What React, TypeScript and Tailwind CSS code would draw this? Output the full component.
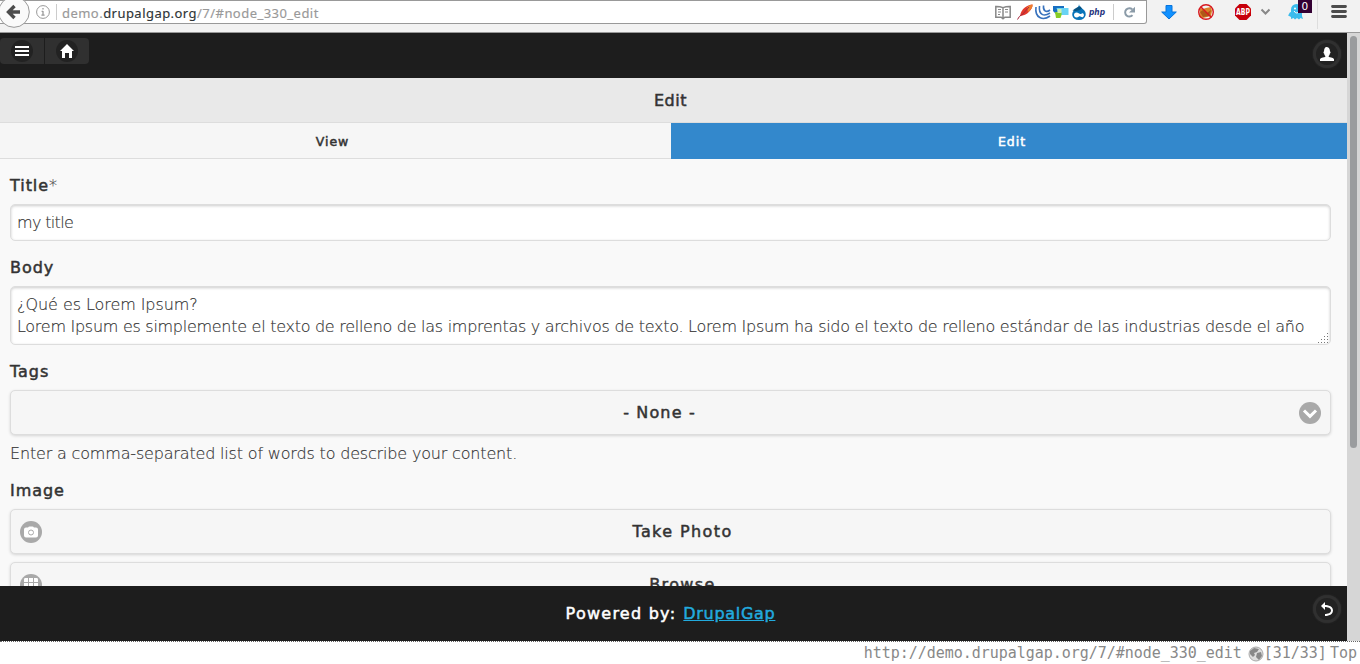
import type { ReactNode } from "react";

const strong = "font-['DejaVu_Sans',sans-serif] font-normal [-webkit-text-stroke:0.5px_currentColor]";

function Disc({ children, dark = false }: { children: ReactNode; dark?: boolean }) {
  return (
    <span className={`flex size-[22px] shrink-0 items-center justify-center rounded-full ${dark ? "bg-[#222]" : "bg-[#a9a9a9]"}`}>
      <svg viewBox="0 0 14 14" className="size-[14px] overflow-visible fill-white">{children}</svg>
    </span>
  );
}

const Bars = () => <path d="M0 2h14v2H0zM0 6h14v2H0zM0 10h14v2H0z" shapeRendering="crispEdges" />;
const Home = () => <path d="M7 0 0 7h2v7h3V9h4v5h3V7h2z" />;
const User = () => (
  <path d="M8.85 10.1c-.18-.4-.2-.76-.15-1.1.68-.51 1.04-1.38 1.19-2.54.6-.11.61-.5.61-.96 0-.44-.01-.8-.5-.94V4.5c0-2.1-1-4-2-4C8 .5 7.5 0 6.5 0 5 0 4 1.88 4 4.5v.06c-.49.14-.5.5-.5.94 0 .46.01.85.61.96C4.26 7.62 4.62 8.5 5.3 9c.05.34.03.7-.15 1.1C1.5 10.5 0 12 0 12v2h14v-2s-1.5-1.5-5.15-1.9z" />
);
const Back = () => <path d="M5 3V0L1 4l4 4V5s6 0 6 3.5S5 12 5 12v2s8 0 8-5.5S5 3 5 3z" />;
const Carat = () => <path d="M11.95 3.4 7 8.35 2.05 3.4-.07 5.52 7 12.6l7.07-7.08z" />;
const Camera = () => (
  <>
    <path d="M12 2.5H9.9a1.5 1.5 0 0 0-1.4-1h-3a1.5 1.5 0 0 0-1.4 1H2a2 2 0 0 0-2 2v6a2 2 0 0 0 2 2h10a2 2 0 0 0 2-2v-6a2 2 0 0 0-2-2z" />
    <circle cx="7" cy="7.5" r="2.5" fill="none" stroke="#a9a9a9" />
  </>
);
const Grid = () => <path d="M0 1.4Q0 0 1.4 0H4v4H0zM5 0h4v4H5zM10 0h2.6Q14 0 14 1.4V4h-4zM0 5h4v4H0zM5 5h4v4H5zM10 5h4v4h-4zM0 10h4v4H1.4Q0 14 0 12.6zM5 10h4v4H5zM10 10h4v2.6q0 1.4-1.4 1.4H10z" />;

function Toolbar() {
  return (
    <div className="relative flex h-[33px] shrink-0 border-b border-[#999] bg-[#f2f2f2]">
      <div className="flex h-6 w-[1147px] items-center rounded-br-[3px] border border-l-0 border-[#999] bg-white pl-9">
        <svg className="size-[14px] shrink-0" viewBox="0 0 14 14" fill="none" stroke="#999">
          <circle cx="7" cy="7" r="6.4" />
          <path d="M7 3v1.6M7 6v4M5.6 6.4H7M5.4 10.2h3.2" strokeWidth="1.3" />
        </svg>
        <span className="ml-1.5 h-4 w-px shrink-0 bg-[#ccc]" />
        <span className="ml-[5px] mt-px whitespace-nowrap font-['Noto_Sans',sans-serif] text-[13px] font-normal leading-5 tracking-[0.46px] text-[#999]">
          demo.<span className="text-[#2e3436]">drupalgap.org</span>/7/#node_330_edit
        </span>
        <svg className="ml-auto h-6 w-[152px] shrink-0" viewBox="994 0 152 24" fill="none">
          <path d="M1003 7.6q-3-1.200-7.200-1.100v10.700h5.300l1.900 1.500 1.900-1.500h5.300V6.500q-4.200-.1-7.200 1.100v10" stroke="#888" strokeWidth="1.5" />
          <path d="M998 9.500h3M998 12h3M998 14.500h2M1005 9.500h3M1005 12h3" stroke="#888" />
          <path d="M1020 16C1021 9 1027 5 1032.500 4.600C1033 9 1027 16 1020 16z" fill="#e2382b" />
          <path d="M1027 7.500C1029 5.500 1031 4.700 1032.500 4.600C1033 7 1031 10 1028 12z" fill="#ee802f" />
          <path d="M1022 14.500q-3 1.500-4.500 5M1022 15l7-8" stroke="#a7263d" />
          <path d="M1036 7C1034.500 18 1043 21 1050 16M1039.500 6C1038.500 15 1044 17 1050 13M1043.500 5.500C1043 11 1046 13 1050 10" stroke="#3872bd" strokeWidth="1.600" />
          <path d="M1053 6h11v8h-8l-3-3z" fill="#176fc1" />
          <path d="M1056.500 8h12v7h-9.500z" fill="#69d3f4" />
          <path d="M1055 12h6.500v3l-1 3h-4.500z" fill="#87cd26" />
          <path d="M1057.500 9h4v4h-4z" fill="#d3f2ae" />
          <path d="M1079 4q0 2.700 3.800 5c5 3.200 3.600 11-3.800 11s-9-7.500-3.500-11Q1079 7 1079 4z" fill="#0873b9" />
          <path d="M1072.500 10.500q5-4 8-4l1.500 2q-4 3.500-9.500 2z" fill="#075383" />
          <path d="M1074 15q0-2.500 2.500-2.500c2 0 3 2 4.500 1.500 2.500-2.500 4 1.800 2 3-1.800.8-2.300-1.300-4-.5-2 1.600-5 1.200-5-1.500z" fill="#fff" />
          <text x="1089" y="15" fontSize="9.500" fontFamily="DejaVu Sans, sans-serif" fontStyle="italic" fontWeight="700" textLength="16" lengthAdjust="spacingAndGlyphs" letterSpacing="0" fill="#27347e">php</text>
          <path d="M1113.500 4v16" stroke="#ccc" />
          <path d="M1132.500 15.200A4.200 4.200 0 1 1 1132.300 9.400" stroke="#8b9ba8" strokeWidth="2" />
          <path d="M1135 6.700v5.800h-6z" fill="#8b9ba8" />
        </svg>
      </div>
      <svg className="h-8 w-[213px]" viewBox="1147 0 213 32" fill="none">
        <path d="M1166 5.500h6V12h4.300l-7.300 7-7.300-7h4.300z" fill="#1191ff" stroke="#0874dc" />
        <path d="M1200 8l3 1 3-1 5-1 1 4-1 5-8 2-4-1 1-6z" fill="#d9842b" />
        <path d="m1200 12 3-2 4 3 4-3-2 6-6 1z" fill="#ae5818" />
        <circle cx="1206" cy="12" r="7.300" stroke="#d71920" strokeWidth="1.400" />
        <path d="m1201 7 10 10" stroke="#d71920" strokeWidth="1.500" />
        <path d="M1239.500 4h7l4.500 4.600v6.800l-4.500 4.600h-7l-4.500-4.600V8.600z" fill="#c7000b" />
        <text x="1236" y="15" fontSize="8" fontFamily="DejaVu Sans, sans-serif" fontWeight="700" textLength="14" lengthAdjust="spacingAndGlyphs" letterSpacing="0" fill="#fff">ABP</text>
        <path d="m1261.500 9.500 4 4 4-4" stroke="#888" strokeWidth="2" />
        <path d="M1291 19V9.500a5.500 5.500 0 0 1 11 0V16l1 3-2.500-1-1.500 1.500-2-1.500-2 1.500-1.500-1.500z" fill="#3bbced" />
        <path d="M1291 12.500l-1.500 2.500 2 1" stroke="#3bbced" strokeWidth="2" />
        <path d="M1294 11q2.500 4 6 0" stroke="#fff" />
        <circle cx="1295" cy="8.500" r="1" fill="#fff" />
        <path d="M1298 0h14v13h-14z" fill="#330033" />
        <text x="1301.500" y="9.500" fontSize="10.500" fontFamily="DejaVu Sans, sans-serif" fontWeight="400" fill="#fff">0</text>
        <path d="M1317.500 0v29" stroke="#ddd" />
        <path d="M1332.500 6.500h13M1332.500 11.500h13M1332.500 16.500h13" stroke="#4c4c4c" strokeWidth="2.800" strokeLinecap="round" />
      </svg>
      <svg className="absolute left-0 top-0 h-[29px] w-8" viewBox="0 0 32 29" fill="none">
        <circle cx="14" cy="12" r="15.300" fill="#fafafa" stroke="#999" />
        <path d="M20 12H9.500m5-6-6 6 6 6" stroke="#4c4c4c" strokeWidth="3.400" />
      </svg>
    </div>
  );
}

const RoundButton = ({ children }: { children: ReactNode }) => (
  <span className="flex size-7 items-center justify-center rounded-full bg-[#303030] shadow-[0_0_2px_#303030]"><Disc dark>{children}</Disc></span>
);

const Label = ({ children }: { children: ReactNode }) => (
  <div className={`${strong} h-[22px] text-base leading-[22px] tracking-[0.95px]`}>{children}</div>
);

function WideButton({ children, icon, end = false }: { children: ReactNode; icon: ReactNode; end?: boolean }) {
  return (
    <div className="flex h-[45px] shrink-0 items-center rounded-[5px] border border-[#ddd] bg-[#f6f6f6] px-[9px] shadow-[0_1px_3px_rgba(0,0,0,0.15)]">
      {!end && icon}
      <span className={`${strong} flex-1 text-center text-base leading-[22px] ${end ? "tracking-[1.15px]" : "pl-0.5 tracking-[1.4px]"}`}>{children}</span>
      {end && icon}
    </div>
  );
}

const field = "rounded-[5px] border border-[#ddd] bg-white px-1.5 shadow-[inset_0_1px_3px_rgba(0,0,0,0.2)]";

export default function App() {
  return (
    <div className="flex h-[664px] w-[1360px] flex-col overflow-hidden bg-white font-['DejaVu_Sans',sans-serif] text-base font-extralight tracking-[-0.275px] text-[#333] [-webkit-text-stroke:0.15px_currentColor]">
      <Toolbar />
      <div className="flex h-[608px] shrink-0">
        <div className="flex w-[1347px] flex-col bg-[#f9f9f9]">
          <header className="flex h-[45px] shrink-0 items-start justify-between bg-[#1d1d1d] pr-1.5">
            <div className="mt-[5px] flex h-[26px] gap-px">
              <div className="flex w-11 items-center justify-center rounded-l bg-[#303030]"><Disc dark><Bars /></Disc></div>
              <div className="flex w-11 items-center justify-center rounded-r bg-[#303030]"><Disc dark><Home /></Disc></div>
            </div>
            <div className="mt-[7px]"><RoundButton><User /></RoundButton></div>
          </header>
          <h1 className={`${strong} flex h-[45px] shrink-0 items-center justify-center border-b border-[#ddd] bg-[#e9e9e9] pr-1.5 pt-0.5 text-base tracking-[0.5px]`}>Edit</h1>
          <nav className={`${strong} flex h-9 shrink-0 text-[12.5px] tracking-[1px]`}>
            <div className="flex w-[671px] items-center justify-center border-b border-[#ddd] bg-[#f6f6f6] pr-1.5 pt-[3px]">View</div>
            <div className="flex flex-1 items-center justify-center bg-[#3388cc] pl-1.5 pt-0.5 text-white">Edit</div>
          </nav>
          <main className="flex h-[427px] shrink-0 flex-col overflow-hidden pl-2.5 pr-4 pt-4">
            <Label>Title<span className="font-extralight [-webkit-text-stroke:0.15px_currentColor]">*</span></Label>
            <div className={`${field} mt-[7px] flex h-[37px] shrink-0 items-center tracking-[-0.65px]`}>my title</div>
            <div className="mt-4"><Label>Body</Label></div>
            <div className={`${field} relative mt-[7px] h-[59px] shrink-0 whitespace-nowrap pt-[7px] leading-[22px]`}>
              <p className="tracking-[-0.07px]">¿Qué es Lorem Ipsum?</p>
              <p>Lorem Ipsum es simplemente el texto de relleno de las imprentas y archivos de texto. Lorem Ipsum ha sido el texto de relleno estándar de las industrias desde el año</p>
              <svg className="absolute bottom-0 right-px h-3 w-3" viewBox="0 0 12 12" shapeRendering="crispEdges" fill="#777">
                <path d="M10 1h1v1h-1zM7 4h1v1H7zM10 4h1v1h-1zM4 7h1v1H4zM7 7h1v1H7zM10 7h1v1h-1zM1 10h1v1H1zM4 10h1v1H4zM7 10h1v1H7zM10 10h1v1h-1z" />
              </svg>
            </div>
            <div className="mb-[7px] mt-4"><Label>Tags</Label></div>
            <WideButton end icon={<Disc><Carat /></Disc>}>- None -</WideButton>
            <p className="mt-2 leading-[22px] tracking-[-0.17px]">Enter a comma-separated list of words to describe your content.</p>
            <div className="mb-[7px] mt-[15px]"><Label>Image</Label></div>
            <WideButton icon={<Disc><Camera /></Disc>}>Take Photo</WideButton>
            <div className="h-2 shrink-0" />
            <WideButton icon={<Disc><Grid /></Disc>}>Browse</WideButton>
          </main>
          <footer className="flex h-[55px] shrink-0 items-start bg-[#1d1d1d] pr-1.5">
            <div className={`${strong} flex flex-1 justify-center gap-[7px] pl-[28px] pt-[17px] leading-[22px] tracking-[1.25px] text-white`}>
              <span>Powered by:</span><span className="tracking-[0.7px] text-[#22aadd] underline">DrupalGap</span>
            </div>
            <div className="mt-[9px]"><RoundButton><Back /></RoundButton></div>
          </footer>
        </div>
        <div className="flex w-[13px] justify-center bg-[#d6d6d6] pt-[3px]">
          <div className="h-[412px] w-[7px] rounded-full bg-[#9a9c9e]" />
        </div>
      </div>
      <footer className="flex h-[23px] shrink-0 items-center justify-end border-t border-dotted border-[#666] pr-[3px] pt-px font-['DejaVu_Sans_Mono',monospace] text-[15px] font-normal tracking-normal text-[#888] [-webkit-text-stroke:0]">
        <span className="tracking-[-0.03px]">http://demo.drupalgap.org/7/#node_330_edit</span>
        <svg className="ml-[6px] size-4" viewBox="0 0 16 16">
          <circle cx="8" cy="8" r="7" fill="#ddd" stroke="#aaa" />
          <path d="M2 5l4-3 5 1-2 3-3 1 1 2-2 2-3-3zM9 7l4-1 1 4-3 4-3-3z" fill="#888" />
        </svg>
        <span>[31/33]</span><span className="ml-[3px]">Top</span>
      </footer>
    </div>
  );
}
